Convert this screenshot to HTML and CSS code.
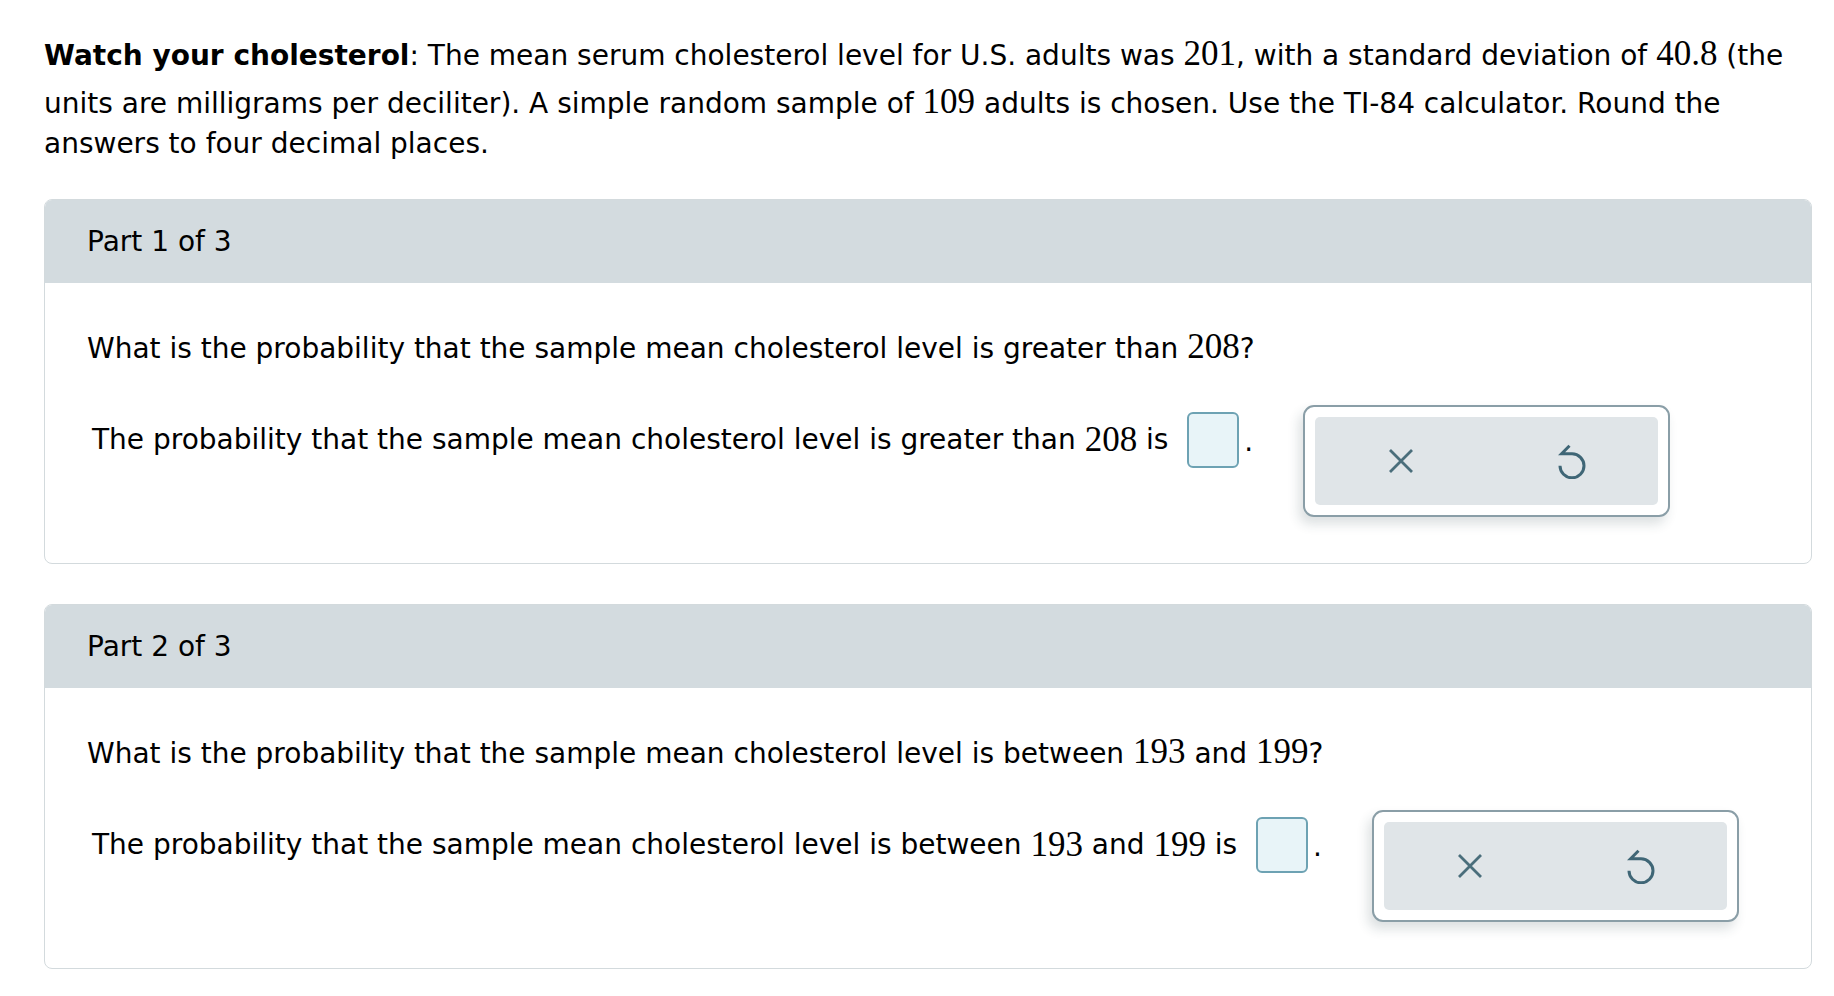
FILE: index.html
```html
<!DOCTYPE html>
<html lang="en">
<head>
<meta charset="utf-8">
<title>Watch your cholesterol</title>
<link rel="stylesheet" href="styles.css">
</head>
<body>
<div class="page">
  <p class="intro"><b>Watch your cholesterol</b>: The mean serum cholesterol level for U.S. adults was <span class="m">201</span>, with a standard deviation of <span class="m">40.8</span> (the units are milligrams per deciliter). A simple random sample of <span class="m">109</span> adults is chosen. Use the TI-84 calculator. Round the answers to four decimal places.</p>

  <section class="part">
    <div class="part-head">Part 1 of 3</div>
    <div class="part-body">
      <p class="question">What is the probability that the sample mean cholesterol level is greater than <span class="m">208</span>?</p>
      <div class="answer-row">
        <div class="answer-text">The probability that the sample mean cholesterol level is greater than <span class="m">208</span> is <span class="input"></span><span class="dot">.</span></div>
        <div class="tools">
          <div class="tools-inner">
            <button class="tool" type="button" aria-label="Clear">
              <svg width="26" height="26" viewBox="0 0 26 26"><path d="M2 2 L24 24 M24 2 L2 24" stroke="#4a6e7b" stroke-width="2.8" fill="none"/></svg>
            </button>
            <button class="tool" type="button" aria-label="Undo">
              <svg width="28" height="36" viewBox="0 0 28 36"><path d="M11.5 2.8 L3.6 10.8 H14 A12 12 0 1 1 2 22.8" stroke="#3f6676" stroke-width="3" fill="none"/></svg>
            </button>
          </div>
        </div>
      </div>
    </div>
  </section>

  <section class="part">
    <div class="part-head">Part 2 of 3</div>
    <div class="part-body">
      <p class="question">What is the probability that the sample mean cholesterol level is between <span class="m">193</span> and <span class="m">199</span>?</p>
      <div class="answer-row">
        <div class="answer-text">The probability that the sample mean cholesterol level is between <span class="m">193</span> and <span class="m">199</span> is <span class="input"></span><span class="dot">.</span></div>
        <div class="tools">
          <div class="tools-inner">
            <button class="tool" type="button" aria-label="Clear">
              <svg width="26" height="26" viewBox="0 0 26 26"><path d="M2 2 L24 24 M24 2 L2 24" stroke="#4a6e7b" stroke-width="2.8" fill="none"/></svg>
            </button>
            <button class="tool" type="button" aria-label="Undo">
              <svg width="28" height="36" viewBox="0 0 28 36"><path d="M11.5 2.8 L3.6 10.8 H14 A12 12 0 1 1 2 22.8" stroke="#3f6676" stroke-width="3" fill="none"/></svg>
            </button>
          </div>
        </div>
      </div>
    </div>
  </section>
</div>
</body>
</html>
```

FILE: styles.css
```css
html, body {
  margin: 0;
  padding: 0;
  background: #ffffff;
}

.page {
  padding: 0 22px 0 44px;
  font-family: "DejaVu Sans", Verdana, sans-serif;
  font-size: 28px;
  line-height: 40px;
  color: #000000;
}

.intro {
  margin: 30px 0 37px 0;
  line-height: 36px;
}

.intro b {
  font-weight: bold;
}

.m {
  font-family: "Liberation Serif", "Times New Roman", serif;
  font-size: 35px;
  line-height: 48px;
}

.part {
  border: 1px solid #d3dadd;
  border-radius: 8px;
  overflow: hidden;
  margin-bottom: 40px;
}

.part-head {
  background: #d3dbdf;
  height: 83px;
  padding-left: 42px;
  display: flex;
  align-items: center;
}

.part-body {
  padding: 40px 42px 46px 42px;
}

.question {
  margin: 0 0 34px 0;
}

.answer-row {
  display: flex;
  align-items: flex-start;
}

.answer-text {
  display: flex;
  align-items: center;
  padding-left: 5px;
  margin-top: 7px;
  white-space: pre;
}

.input {
  display: inline-block;
  width: 48px;
  height: 52px;
  border: 2px solid #6da2b3;
  border-radius: 6px;
  background: #e8f4f8;
  margin-left: 10px;
}

.dot {
  margin-left: 5px;
  line-height: 1;
  align-self: center;
  padding-top: 4px;
}

.tools {
  margin-left: 50px;
  border: 2px solid #8a9ea7;
  border-radius: 11px;
  padding: 10px;
  background: #ffffff;
  box-shadow: -4px 7px 12px rgba(40, 60, 70, 0.16);
}

.tools-inner {
  display: flex;
  width: 343px;
  height: 88px;
  background: #e0e5e8;
  border-radius: 5px;
}

.tool {
  flex: 1;
  border: 0;
  background: transparent;
  padding: 0;
  margin: 0;
  display: flex;
  align-items: center;
  justify-content: center;
}
```
